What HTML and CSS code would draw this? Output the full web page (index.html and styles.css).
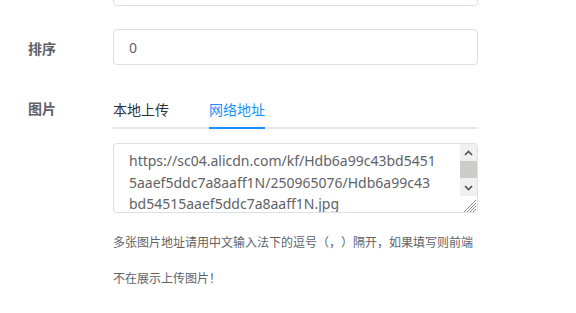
FILE: index.html
```html
<!DOCTYPE html>
<html lang="zh-CN">
<head>
<meta charset="utf-8">
<title>表单</title>
<link rel="stylesheet" href="styles.css">
</head>
<body>
<div class="form">
  <div class="item">
    <div class="label"></div>
    <div class="content"><div class="input"></div></div>
  </div>
  <div class="item">
    <div class="label">排序</div>
    <div class="content"><input class="input" type="text" value="0"></div>
  </div>
  <div class="item">
    <div class="label">图片</div>
    <div class="content">
      <div class="tabs">
        <div class="tab">本地上传</div>
        <div class="tab active">网络地址</div>
      </div>
      <div class="ta-wrap">
        <textarea class="ta">https://sc04.alicdn.com/kf/Hdb6a99c43bd54515aaef5ddc7a8aaff1N/250965076/Hdb6a99c43bd54515aaef5ddc7a8aaff1N.jpg</textarea>
        <div class="sb">
          <div class="sb-btn"><svg width="9" height="6" viewBox="0 0 9 6"><path d="M1 5 L4.5 1.5 L8 5" fill="none" stroke="#505050" stroke-width="1.6"/></svg></div>
          <div class="sb-track"><div class="sb-thumb"></div></div>
          <div class="sb-btn"><svg width="9" height="6" viewBox="0 0 9 6"><path d="M1 1 L4.5 4.5 L8 1" fill="none" stroke="#505050" stroke-width="1.6"/></svg></div>
          <div class="grip"><svg width="17" height="16" viewBox="0 0 17 16"><path d="M16 4 L4 16 M16 7 L7 16 M16 10 L10 16 M16 13 L13 16" stroke="#8a8a8a" stroke-width="1"/></svg></div>
        </div>
      </div>
      <p class="hint">多张图片地址请用中文输入法下的逗号（，）隔开，如果填写则前端不在展示上传图片！</p>
    </div>
  </div>
</div>
</body>
</html>
```
FILE: styles.css
```css
html, body {
  margin: 0;
  padding: 0;
  background: #fff;
}
body {
  font-family: "Noto Sans CJK SC", "Noto Sans", sans-serif;
  color: #606266;
  text-spacing-trim: space-all;
}
.form {
  margin-top: -30px;
  padding-left: 28px;
}
.item {
  display: flex;
  margin-bottom: 22px;
}
.item:first-child {
  margin-bottom: 23px;
}
.label {
  width: 85px;
  flex: none;
  font-size: 14px;
  font-weight: 700;
  line-height: 38px;
  color: #606266;
}
.content {
  width: 365px;
}
.input {
  display: block;
  box-sizing: border-box;
  width: 365px;
  height: 36px;
  margin: 0;
  border: 1px solid #dcdfe6;
  border-radius: 4px;
  padding: 0 15px;
  font-family: "Noto Sans", "Noto Sans CJK SC", sans-serif;
  font-size: 14px;
  color: #606266;
  background: #fff;
  outline: none;
}
.tabs {
  display: flex;
  gap: 40px;
  height: 40px;
  box-shadow: inset 0 -2px 0 #e4e7ed;
  margin-bottom: 14px;
}
.tab {
  height: 40px;
  line-height: 40px;
  font-size: 14px;
  color: #303133;
}
.tab.active {
  color: #1890ff;
  box-shadow: inset 0 -2px 0 #1890ff;
}
.ta-wrap {
  position: relative;
  width: 365px;
  height: 70px;
}
.ta {
  display: block;
  box-sizing: border-box;
  width: 365px;
  height: 70px;
  margin: 0;
  border: 1px solid #dcdfe6;
  border-radius: 4px;
  padding: 6px 40px 0 15px;
  font-family: "Noto Sans", "Noto Sans CJK SC", sans-serif;
  font-size: 14px;
  line-height: 21.5px;
  color: #606266;
  resize: none;
  overflow: hidden;
  outline: none;
  background: #fff;
}
.sb {
  position: absolute;
  top: 1px;
  right: 1px;
  width: 17px;
  height: 68px;
  display: flex;
  flex-direction: column;
  background: #f0f0f0;
  border-top-right-radius: 3px;
  border-bottom-right-radius: 3px;
}
.sb-btn {
  height: 17px;
  display: flex;
  align-items: center;
  justify-content: center;
}
.sb-track {
  height: 18px;
}
.sb-thumb {
  height: 17px;
  background: #cdccc7;
}
.grip {
  height: 16px;
  background: #fff;
}
.grip svg {
  display: block;
}
.hint {
  margin: 11px 0 0;
  font-size: 12px;
  line-height: 36px;
  color: #606266;
  text-spacing-trim: space-all;
}
```
